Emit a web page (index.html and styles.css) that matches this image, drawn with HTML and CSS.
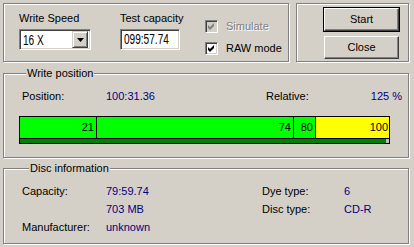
FILE: index.html
```html
<!DOCTYPE html>
<html lang="en">
<head>
  <meta charset="UTF-8" />
  <title>Write</title>
  <link rel="stylesheet" href="styles.css">
</head>
<body>
  <div class="window">
    <div class="top">
      <div class="box settings">
        <div class="field speed">
          <label>Write Speed</label>
          <div class="combo">
            <span class="big">16 X</span>
            <span class="combo-btn">
              <svg width="7" height="4" viewBox="0 0 7 4"><polygon points="0,0 7,0 3.5,4" fill="#000"/></svg>
            </span>
          </div>
        </div>
        <div class="field capacity">
          <label>Test capacity</label>
          <div class="edit"><span class="big">099:57.74</span></div>
        </div>
        <div class="checks">
          <div class="check disabled">
            <span class="tick"><svg width="7" height="7" viewBox="0 0 7 7"><polygon points="0,2 2,4 6,0 6,3 2,7 0,5"/></svg></span>
            Simulate
          </div>
          <div class="check">
            <span class="tick"><svg width="7" height="7" viewBox="0 0 7 7"><polygon points="0,2 2,4 6,0 6,3 2,7 0,5"/></svg></span>
            RAW mode
          </div>
        </div>
      </div>
      <div class="box actions">
        <button class="btn default">Start</button>
        <button class="btn">Close</button>
      </div>
    </div>

    <fieldset class="group position">
      <legend>Write position</legend>
      <div class="pos-row">
        <span class="lab">Position:</span>
        <span class="val wide">100:31.36</span>
        <span class="rel">Relative:</span>
        <span class="val">125 %</span>
      </div>
      <div class="bar">
        <div class="segs">
          <div class="seg s1">21</div>
          <div class="seg s2">74</div>
          <div class="seg s3">80</div>
          <div class="seg s4">100</div>
        </div>
        <div class="strip"><span class="done"></span><span class="rest"></span></div>
      </div>
    </fieldset>

    <fieldset class="group disc">
      <legend>Disc information</legend>
      <div class="info">
        <span>Capacity:</span>
        <span class="val">79:59.74</span>
        <span>Dye type:</span>
        <span class="val">6</span>

        <span></span>
        <span class="val">703 MB</span>
        <span>Disc type:</span>
        <span class="val">CD-R</span>

        <span>Manufacturer:</span>
        <span class="val">unknown</span>
        <span></span>
        <span></span>
      </div>
    </fieldset>
  </div>
</body>
</html>
```

FILE: styles.css
```css
body { margin: 0; background: #d4d0c8; font: 11px/13px "Liberation Sans", Arial, sans-serif; color: #000; }
.window { width: 414px; height: 247px; box-sizing: border-box; padding: 3px 5px 0 3px; overflow: hidden; }

/* etched frames */
.box, .group {
  border: 1px solid #808080;
  box-shadow: inset 1px 1px 0 #fff, 1px 1px 0 #fff;
  box-sizing: border-box;
}

.top { display: flex; height: 59px; }
.settings { width: 286px; display: flex; padding: 8px 0 0 15px; }
.actions { width: 113px; margin-left: auto; display: flex; flex-direction: column; align-items: flex-start; padding: 4px 0 0 27px; gap: 5px; }

.field label { display: block; margin-bottom: 4px; white-space: nowrap; }
.speed { width: 72px; }
.capacity { width: 60px; margin-left: 29px; }

.combo, .edit, .tick {
  background: #fff;
  border: 1px solid;
  border-color: #808080 #fff #fff #808080;
  box-shadow: inset 1px 1px 0 #404040, inset -1px -1px 0 #d4d0c8;
}
.combo { height: 21px; box-sizing: border-box; display: flex; align-items: center; padding: 2px 2px 2px 3px; }
.combo .big { flex: 1; margin-top: 1px; }
.combo-btn {
  width: 16px; height: 17px; box-sizing: border-box;
  background: #d4d0c8;
  border: 1px solid; border-color: #d4d0c8 #404040 #404040 #d4d0c8;
  box-shadow: inset 1px 1px 0 #fff, inset -1px -1px 0 #808080;
  display: flex; align-items: center; justify-content: center;
}
.combo-btn svg { display: block; margin-top: 1px; }
.edit { height: 21px; box-sizing: border-box; padding: 1px 0 0 3px; }

.big { display: inline-block; font-size: 14px; line-height: 16px; transform: scaleX(0.72); transform-origin: left center; white-space: nowrap; }

.checks { margin-left: 25px; padding-top: 8px; }
.check { display: flex; align-items: center; height: 13px; margin-bottom: 9px; }
.tick { width: 13px; height: 13px; box-sizing: border-box; padding: 2px; margin-right: 8px; }
.tick svg { display: block; fill: #000; }
.check.disabled { color: #808080; text-shadow: 1px 1px 0 #fff; }
.check.disabled .tick { background: #d4d0c8; }
.check.disabled .tick svg { fill: #808080; }

.btn {
  width: 75px; height: 23px; margin: 0; padding: 0;
  background: #d4d0c8; font: inherit; color: #000;
  border: 1px solid; border-color: #fff #404040 #404040 #fff;
  box-shadow: inset -1px -1px 0 #808080;
}
.btn.default { outline: 1px solid #000; }

/* group boxes */
.group { margin: 5px 0 0; padding: 10px 4px 0 15px; min-width: 0; }
.group legend { margin-left: 7px; padding: 0 1px; background: #d4d0c8; }
.position { height: 91px; }
.disc { height: 82px; margin-top: 4px; padding-left: 18px; }

.val { color: #000080; }
.pos-row { display: flex; margin-left: 3px; width: 380px; }
.lab { width: 84px; }
.wide { width: 160px; }
.rel { flex: 1; }

.bar { width: 371px; height: 28px; margin-top: 13px; border: 1px solid #000; box-sizing: border-box; display: flex; flex-direction: column; }
.segs { display: flex; height: 22px; border-bottom: 1px solid #000; box-sizing: border-box; }
.seg { text-align: right; line-height: 21px; padding-right: 2px; box-sizing: border-box; background: #00ff00; }
.s1 { width: 77px; border-right: 1px solid #000; }
.s2 { width: 197px; border-right: 1px solid #000; }
.s3 { width: 22px; border-right: 1px solid #0000ff; }
.s4 { flex: 1; background: #ffff00; padding-right: 1px; }
.strip { flex: 1; display: flex; }
.done { flex: 1; background: #008000; }
.rest { width: 3px; background: #c0c0c0; }

.info { display: grid; grid-template-columns: 84px 156px 82px auto; row-gap: 5px; }
```
